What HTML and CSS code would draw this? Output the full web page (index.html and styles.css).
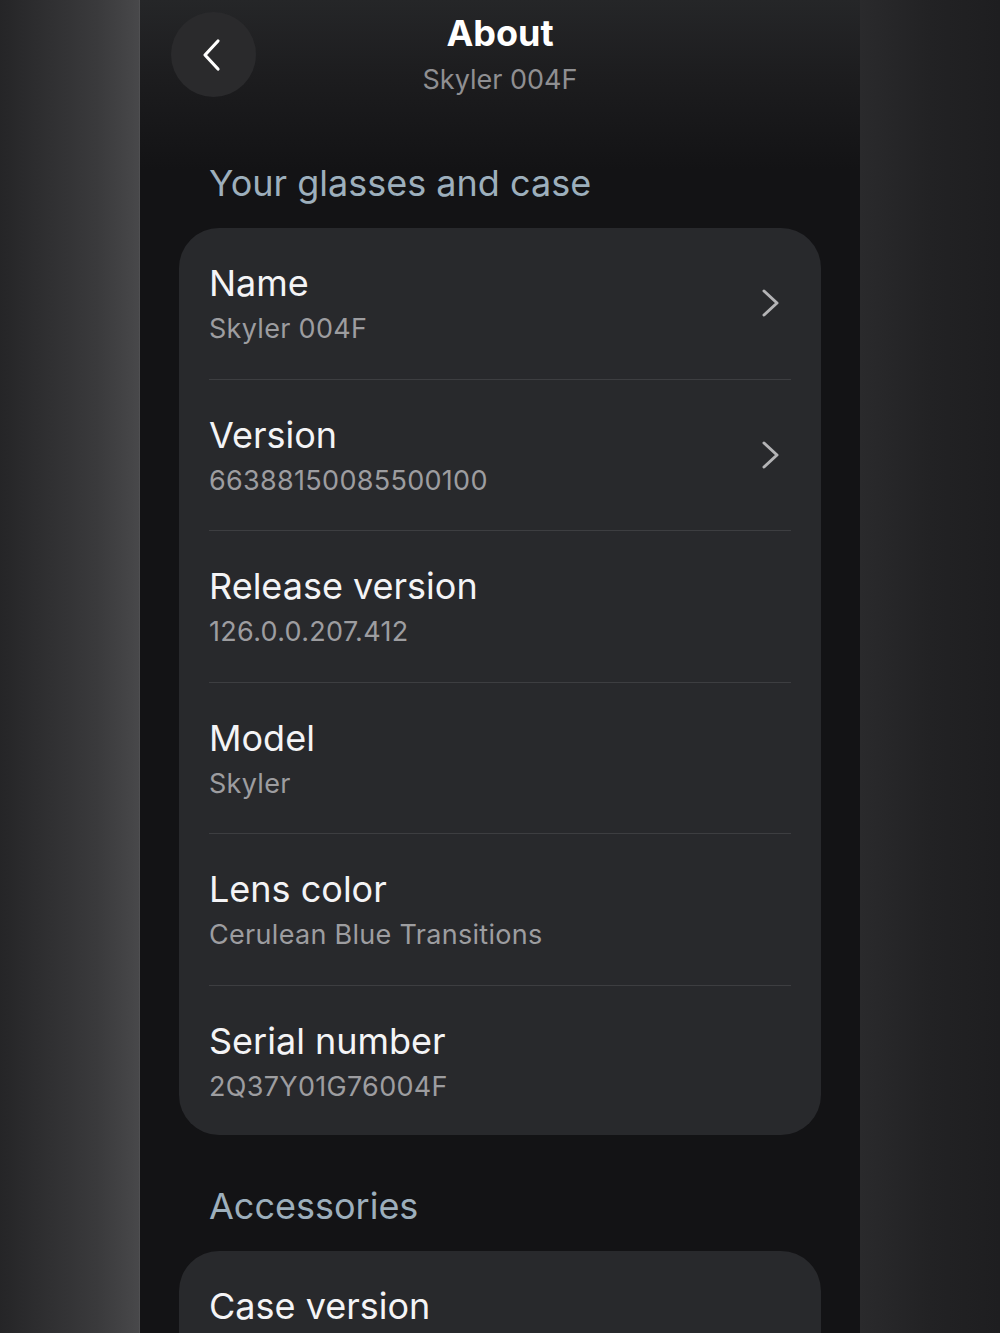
FILE: index.html
```html
<!DOCTYPE html>
<html lang="en">
<head>
    <meta charset="UTF-8">
    <meta name="viewport" content="width=device-width, initial-scale=1.0">
    <title>About</title>
    <link rel="stylesheet" href="styles.css">
</head>
<body>
    <div class="side side-left"></div>

    <main class="screen">
        <header class="topbar">
            <button class="back-btn" type="button" aria-label="Back">
                <svg width="22" height="34" viewBox="0 0 22 34">
                    <path d="M17 3 L4 17 L17 31" fill="none" stroke="#ffffff" stroke-width="3.2" stroke-linecap="round" stroke-linejoin="round"/>
                </svg>
            </button>
            <div class="title-block">
                <h1>About</h1>
                <p class="subtitle">Skyler 004F</p>
            </div>
            <div></div>
        </header>

        <h2 class="section-title">Your glasses and case</h2>
        <section class="card">
            <div class="row">
                <div class="row-text">
                    <div class="row-label">Name</div>
                    <div class="row-value">Skyler 004F</div>
                </div>
                <svg class="chevron" width="20" height="28" viewBox="0 0 20 28">
                    <path d="M3 2 L16 14 L3 26" fill="none" stroke="#b4b4b6" stroke-width="3" stroke-linecap="round" stroke-linejoin="round"/>
                </svg>
            </div>
            <div class="row">
                <div class="row-text">
                    <div class="row-label">Version</div>
                    <div class="row-value">66388150085500100</div>
                </div>
                <svg class="chevron" width="20" height="28" viewBox="0 0 20 28">
                    <path d="M3 2 L16 14 L3 26" fill="none" stroke="#b4b4b6" stroke-width="3" stroke-linecap="round" stroke-linejoin="round"/>
                </svg>
            </div>
            <div class="row">
                <div class="row-text">
                    <div class="row-label">Release version</div>
                    <div class="row-value">126.0.0.207.412</div>
                </div>
            </div>
            <div class="row">
                <div class="row-text">
                    <div class="row-label">Model</div>
                    <div class="row-value">Skyler</div>
                </div>
            </div>
            <div class="row">
                <div class="row-text">
                    <div class="row-label">Lens color</div>
                    <div class="row-value">Cerulean Blue Transitions</div>
                </div>
            </div>
            <div class="row">
                <div class="row-text">
                    <div class="row-label">Serial number</div>
                    <div class="row-value">2Q37Y01G76004F</div>
                </div>
            </div>
        </section>

        <h2 class="section-title accessories">Accessories</h2>
        <section class="card">
            <div class="row">
                <div class="row-text">
                    <div class="row-label">Case version</div>
                    <div class="row-value">&nbsp;</div>
                </div>
            </div>
        </section>
    </main>

    <div class="side side-right"></div>
</body>
</html>
```

FILE: styles.css
```css
body {
    margin: 0;
    height: 1333px;
    overflow: hidden;
    display: grid;
    grid-template-columns: 140px 720px 140px;
    font-family: Inter, "Open Sans", sans-serif;
    background: #131315;
}

.side-left {
    background: linear-gradient(to right, #252527, #3a3a3c 70%, #48484a);
    border-right: 1px solid #505052;
}

.side-right {
    background: linear-gradient(to right, #2a2a2c, #222224 50%, #1e1e20);
}

.screen {
    background: linear-gradient(to bottom, #252628 0, #1c1c1e 80px, #131315 170px);
    overflow: hidden;
}

.topbar {
    display: grid;
    grid-template-columns: 1fr auto 1fr;
    align-items: start;
    padding: 11px 31px 0;
}

.back-btn {
    width: 85px;
    height: 85px;
    margin-top: 1px;
    border: none;
    border-radius: 50%;
    background: #2a2a2c;
    display: flex;
    align-items: center;
    justify-content: center;
    padding: 0 4px 0 0;
    cursor: pointer;
}

.title-block {
    text-align: center;
}

h1 {
    margin: 0;
    font-size: 36px;
    line-height: 44px;
    font-weight: 700;
    color: #ffffff;
}

.subtitle {
    margin: 9px 0 0;
    font-size: 27px;
    line-height: 32px;
    color: #8f8f92;
}

.section-title {
    margin: 65px 0 23px 69px;
    font-size: 36px;
    line-height: 43px;
    font-weight: 400;
    color: #9dafbc;
}

.section-title.accessories {
    margin-top: 50px;
}

.card {
    margin: 0 39px;
    background: #28292c;
    border-radius: 40px;
}

.row {
    margin: 0 30px;
    height: 151.5px;
    box-sizing: border-box;
    padding-top: 33px;
    border-bottom: 1px solid #3d3e41;
    display: flex;
    justify-content: space-between;
    align-items: flex-start;
}

.card .row:last-child {
    height: 149px;
    border-bottom: none;
}

.row-label {
    font-size: 36px;
    line-height: 44px;
    color: #f4f4f6;
}

.row-value {
    margin-top: 8px;
    font-size: 27px;
    line-height: 32px;
    color: #9d9da0;
    letter-spacing: 0.3px;
}

.chevron {
    margin: 28px 10px 0 0;
}
```
